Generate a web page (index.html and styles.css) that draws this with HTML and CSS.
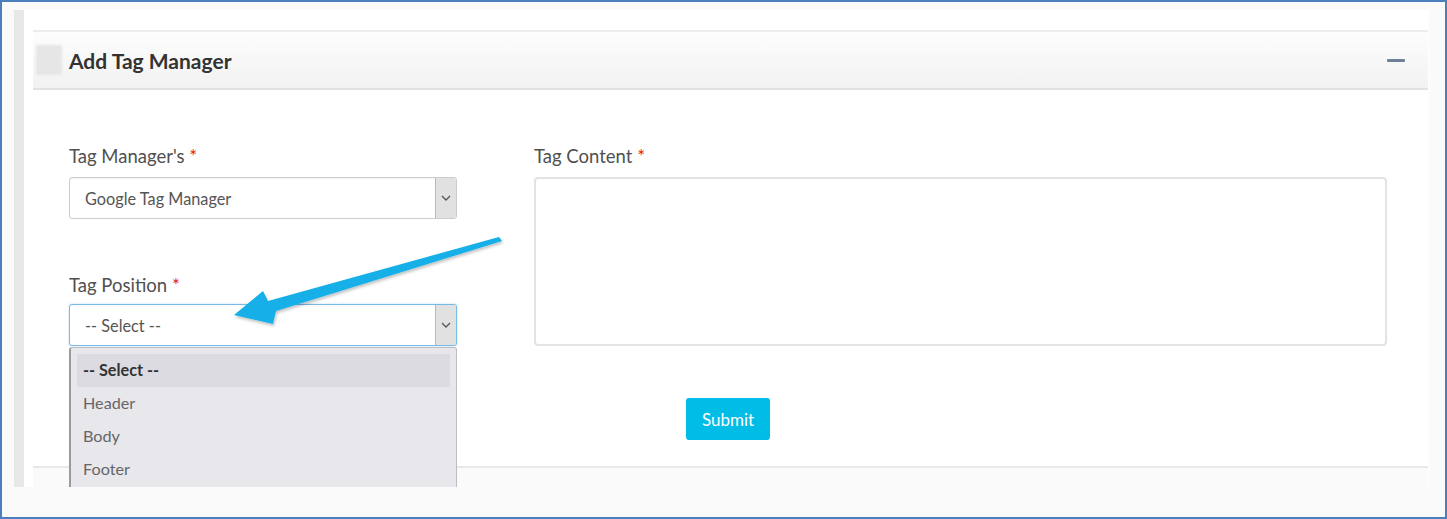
FILE: index.html
```html
<!DOCTYPE html>
<html>
<head>
<meta charset="utf-8">
<link rel="stylesheet" href="styles.css">
</head>
<body>
<div class="frame">
  <div class="page">
    <div class="rail"></div>
    <div class="content">
      <div class="panel">
        <div class="panel-head">
          <span class="head-icon"></span>
          <h2 class="panel-title">Add Tag Manager</h2>
          <span class="collapse"></span>
        </div>
        <div class="panel-body">
          <div class="form">
            <div class="col-left">
              <div class="field">
                <label class="label">Tag Manager's <span class="req">*</span></label>
                <div class="select">
                  <span class="select-value">Google Tag Manager</span>
                  <span class="select-btn"><svg width="10" height="6" viewBox="0 0 10 6"><path d="M1 1l4 4 4-4" fill="none" stroke="#555" stroke-width="1.3"/></svg></span>
                </div>
              </div>
              <div class="field field-pos">
                <label class="label label-pos">Tag Position <span class="req">*</span></label>
                <div class="select select-focus">
                  <span class="select-value">-- Select --</span>
                  <span class="select-btn"><svg width="10" height="6" viewBox="0 0 10 6"><path d="M1 1l4 4 4-4" fill="none" stroke="#555" stroke-width="1.3"/></svg></span>
                </div>
                <ul class="dropdown">
                  <li class="opt opt-active">-- Select --</li>
                  <li class="opt">Header</li>
                  <li class="opt">Body</li>
                  <li class="opt">Footer</li>
                </ul>
              </div>
            </div>
            <div class="col-right">
              <label class="label">Tag Content <span class="req">*</span></label>
              <div class="textarea"></div>
            </div>
          </div>
          <div class="actions">
            <button class="submit">Submit</button>
          </div>
        </div>
        <div class="panel-foot"></div>
      </div>
    </div>
  </div>
  <svg class="arrow" width="1447" height="519" viewBox="0 0 1447 519">
    <defs>
      <filter id="sh" x="-10%" y="-10%" width="130%" height="140%">
        <feDropShadow dx="1" dy="2" stdDeviation="1.5" flood-color="#000" flood-opacity="0.25"/>
      </filter>
    </defs>
    <polygon filter="url(#sh)" fill="#12afe8" points="499,237 502,241 276,311 273,324 234,315 263,291 268,301"/>
  </svg>
</div>
</body>
</html>
```

FILE: styles.css
```css
* { box-sizing: border-box; }
html, body { margin: 0; padding: 0; }
body { font-family: "Lato", "Open Sans", sans-serif; width: 1447px; height: 519px; overflow: hidden; }

.frame {
  position: relative;
  width: 1447px;
  height: 519px;
  border: 2px solid #4a7ebc;
  background: #fafafa;
  padding: 8px 16px 0 12px;
}
.page {
  display: flex;
  height: 477px;
}
.rail { width: 10px; background: #e7e7e7; }
.content {
  flex: 1;
  background: #fff;
  padding: 20px 0 0 9px;
  overflow: hidden;
}
.panel {
  width: 1395px;
  height: 457px;
  display: flex;
  flex-direction: column;
}
.panel-head {
  height: 60px;
  display: flex;
  align-items: center;
  border-top: 2px solid #ececec;
  border-bottom: 2px solid #e2e2e2;
  background: linear-gradient(#fdfdfd, #f2f2f2);
  padding: 0 23px 0 3px;
}
.head-icon {
  width: 26px;
  height: 30px;
  background: #e6e6e6;
  filter: blur(1px);
  margin-right: 7px;
}
.panel-title {
  margin: 0;
  flex: 1;
  font-size: 21px;
  font-weight: 700;
  color: #333;
}
.collapse {
  width: 18px;
  height: 3px;
  background: #6f7f98;
  border-radius: 1px;
  margin-top: 1px;
}
.panel-body {
  flex: 1;
  padding: 55px 0 0 36px;
}
.form {
  display: flex;
  gap: 77px;
}
.col-left { width: 388px; }
.col-right { width: 853px; }
.label {
  display: block;
  font-size: 18.5px;
  color: #505050;
  line-height: 22px;
  height: 32px;
}
.label-pos { padding-top: 2px; }
.req { color: #e41b1b; }
.field-pos { position: relative; margin-top: 53px; }
.select {
  height: 42px;
  border: 1px solid #ccc;
  border-radius: 3px;
  display: flex;
  align-items: center;
  background: #fff;
  padding-left: 15px;
  box-shadow: inset 0 1px 1px rgba(0,0,0,0.05);
}
.select-focus { border-color: #7ab8e6; box-shadow: 0 0 2px rgba(102,175,233,0.5); }
.select-value { flex: 1; font-size: 16.3px; color: #555; }
.select-btn {
  width: 21px;
  height: 40px;
  background: #e1e1e1;
  border-left: 1px solid #b8b8b8;
  display: flex;
  align-items: center;
  justify-content: center;
  border-radius: 0 2px 2px 0;
}
.dropdown {
  position: absolute;
  left: 0;
  top: 75px;
  width: 388px;
  height: 160px;
  margin: 0;
  padding: 6px 6px 0;
  list-style: none;
  background: #e8e7ec;
  border: 1px solid #bdbdbd;
  border-left: 2px solid #9a9a9a;
  border-radius: 3px 3px 0 0;
}
.opt {
  height: 33px;
  line-height: 31px;
  padding-left: 6px;
  font-size: 16.2px;
  color: #666;
}
.opt-active { background: #dcdbe1; color: #333; font-weight: 700; }
.textarea {
  height: 169px;
  border: 2px solid #e3e3e3;
  border-radius: 4px;
  background: #fff;
}
.actions {
  display: flex;
  justify-content: center;
  width: 1318px;
  margin-top: 52px;
}
.submit {
  width: 84px;
  height: 42px;
  border: none;
  border-radius: 3px;
  background: #00bde8;
  color: #fff;
  font-family: inherit;
  font-size: 17px;
}
.panel-foot {
  height: 21px;
  border-top: 2px solid #e8e8e8;
  background: #fafafa;
}
.arrow {
  position: absolute;
  left: -2px;
  top: -2px;
  pointer-events: none;
}
```
